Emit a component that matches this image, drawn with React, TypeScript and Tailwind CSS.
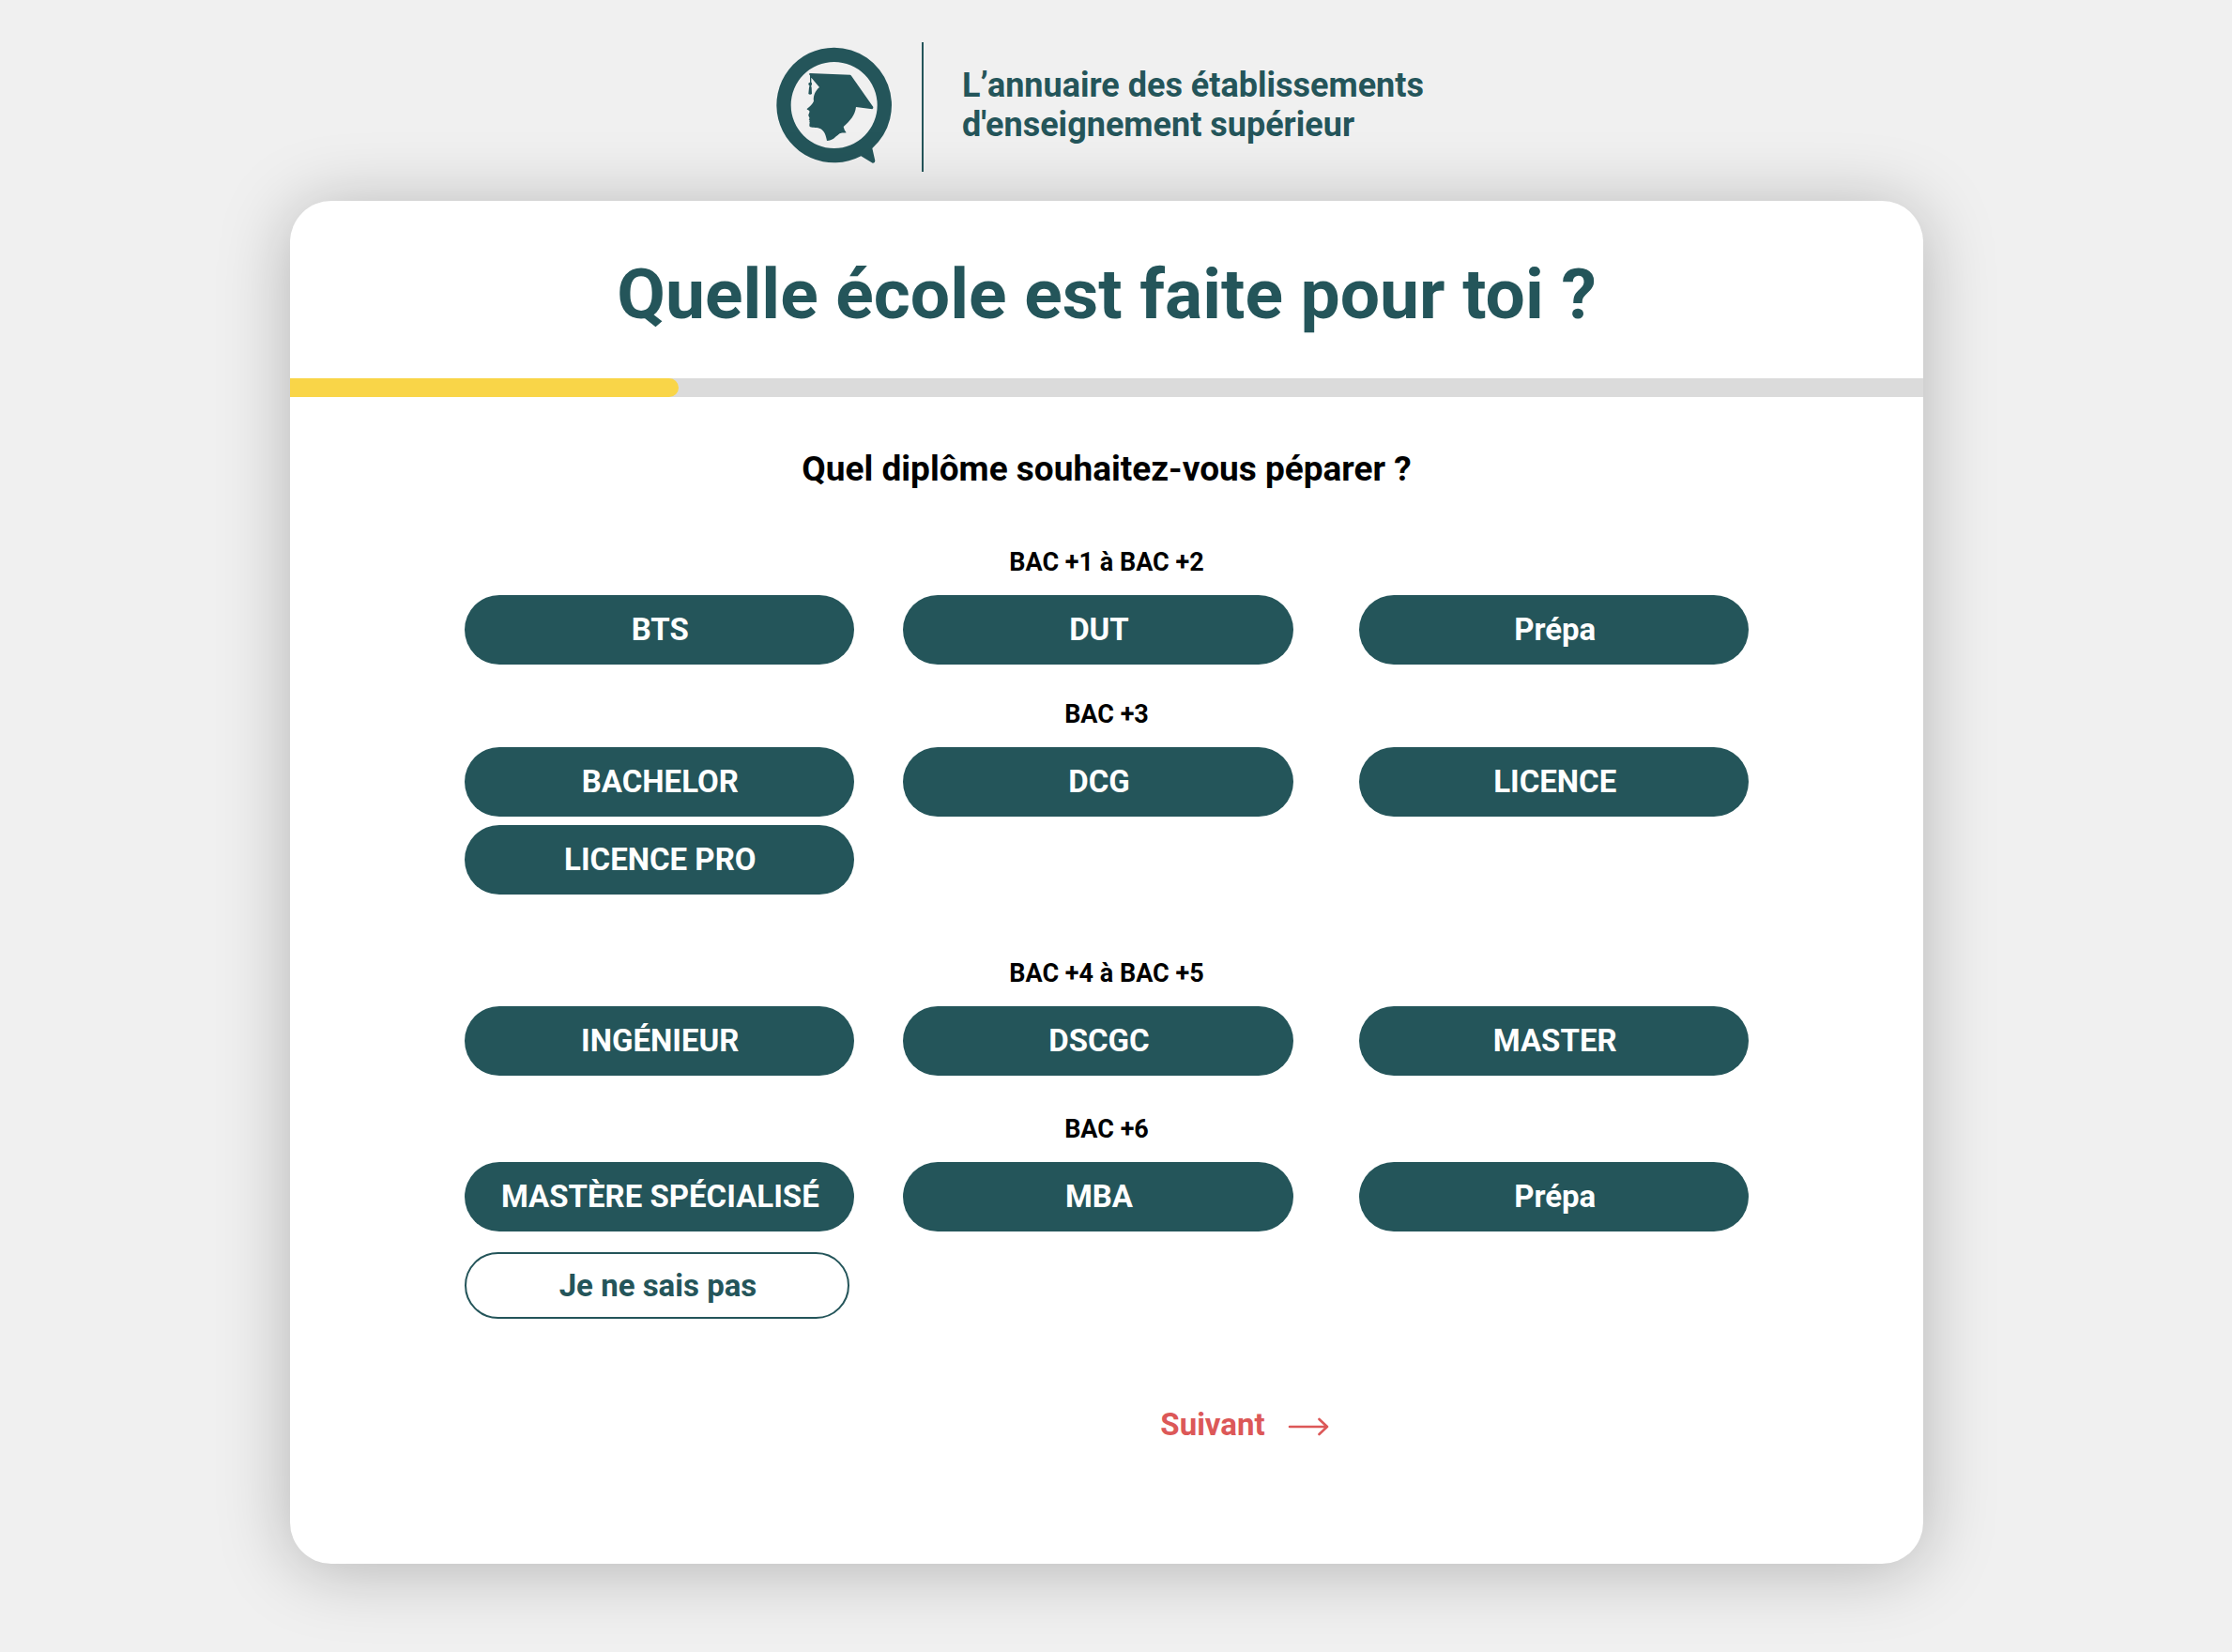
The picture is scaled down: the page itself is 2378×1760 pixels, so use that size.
import { useState } from "react";

type Group = { label: string; options: string[]; spacing: string };

const groups: Group[] = [
  { label: "BAC +1 à BAC +2", options: ["BTS", "DUT", "Prépa"], spacing: "mb-[37px]" },
  { label: "BAC +3", options: ["BACHELOR", "DCG", "LICENCE", "LICENCE PRO"], spacing: "mb-[68px]" },
  { label: "BAC +4 à BAC +5", options: ["INGÉNIEUR", "DSCGC", "MASTER"], spacing: "mb-[41px]" },
  { label: "BAC +6", options: ["MASTÈRE SPÉCIALISÉ", "MBA", "Prépa"], spacing: "mb-[22px]" },
];

function Logo() {
  return (
    <svg viewBox="80 61 372 372" className="size-[124px] shrink-0" fill="#24555a" role="img" aria-label="Logo">
      <path
        fillRule="evenodd"
        d="M265 63A184 184 0 0 1 387 384.7L396 425Q396 433 388 432L351 409.7A184 184 0 1 1 265 63Z M265 109a138 138 0 1 0 0 276a138 138 0 0 0 0-276Z"
      />
      <path d="M186 145L316 150Q318 150 320 153L390 253Q391 257 387 260L335 253C332 280 315 298 295 316C297 324 299 329 304 335C292 337 288 334 280 340C268 349 260 361 242 361C239 344 234 330 222 323C212 318 197 320 189 317C184 314 187 307 187 301Q184 299 187 296L184 293Q188 290 186 287L183 281C182 276 188 271 186 265C183 263 178 262 178 259C186 252 197 243 200 234C197 222 203 202 218 190L192 159V174Q195 176 194 179Q195 182 192 184Q191 187 193 191L194 211Q188 215 183 211L185 191Q187 187 186 184Q182 182 183 179Q182 176 188 174V152L186 151Z" />
    </svg>
  );
}

function Arrow() {
  return (
    <svg viewBox="0 0 44 22" className="mt-1 h-[22px] w-11" fill="none" stroke="#dc5858" strokeWidth="2.6" strokeLinecap="round" strokeLinejoin="round" aria-hidden="true">
      <path d="M2 11H42M33.5 3L42 11L33.5 19" />
    </svg>
  );
}

export default function App() {
  const [selected, setSelected] = useState<string | null>(null);

  return (
    <div className="flex min-h-screen flex-col items-center bg-[#f0f0f0] pr-5 pb-[94px] font-['Roboto',sans-serif] font-bold">
      <header className="flex items-start pt-[45px] pr-[14px] pb-[31px] text-[#24555a]">
        <div className="pt-[5px]">
          <Logo />
        </div>
        <div className="mr-[41px] ml-[31px] h-[138px] w-[2px] bg-[#24555a]" />
        <p className="pt-[25px] text-[36px] leading-[42px]">
          L’annuaire des établissements
          <br />
          d'enseignement supérieur
        </p>
      </header>

      <main className="w-full max-w-[1740px] rounded-[44px] bg-white pb-32 shadow-[0_6px_76px_rgba(0,0,0,0.25)]">
        <h1 className="pt-[54px] pb-[45px] text-center text-[75px] leading-[90px] text-[#24555a]">
          Quelle école est faite pour toi ?
        </h1>
        <div
          role="progressbar"
          aria-label="Progression"
          aria-valuemin={0}
          aria-valuemax={100}
          aria-valuenow={24}
          className="h-5 bg-[#dbdbdb]"
        >
          <div className="h-full w-[23.8%] rounded-r-full bg-[#f9d548]" />
        </div>

        <h2 className="mt-[55px] text-center text-[37px] leading-[44px] text-black">
          Quel diplôme souhaitez-vous péparer ?
        </h2>

        <div className="mx-auto mt-[61px] w-full max-w-[1368px]">
          {groups.map((group, g) => (
            <section key={group.label} aria-label={group.label} className={group.spacing}>
              <h3 className="mb-[19px] text-center text-[27px] leading-8 text-black">{group.label}</h3>
              <div className="grid grid-cols-[414fr_52fr_416fr_70fr_414fr] gap-y-[9px]">
                {group.options.map((option, i) => (
                  <button
                    key={option}
                    type="button"
                    aria-pressed={selected === `${g}-${i}`}
                    onClick={() => setSelected(`${g}-${i}`)}
                    className={`h-[74px] rounded-full bg-[#24555a] pl-0.5 text-[33px] leading-10 text-white ${
                      i % 3 === 0 ? "col-start-1" : i % 3 === 1 ? "col-start-3" : "col-start-5"
                    }`}
                  >
                    {option}
                  </button>
                ))}
              </div>
            </section>
          ))}
          <button
            type="button"
            onClick={() => setSelected("unknown")}
            className="h-[71px] w-[410px] rounded-full border-2 border-[#24555a] pl-0.5 text-[33px] leading-10 text-[#24555a]"
          >
            Je ne sais pas
          </button>
        </div>

        <div className="mt-[93px] flex justify-center pl-[294px]">
          <button type="button" className="flex items-center gap-6 text-[33px] leading-10 text-[#dc5858]">
            Suivant
            <Arrow />
          </button>
        </div>
      </main>
    </div>
  );
}
